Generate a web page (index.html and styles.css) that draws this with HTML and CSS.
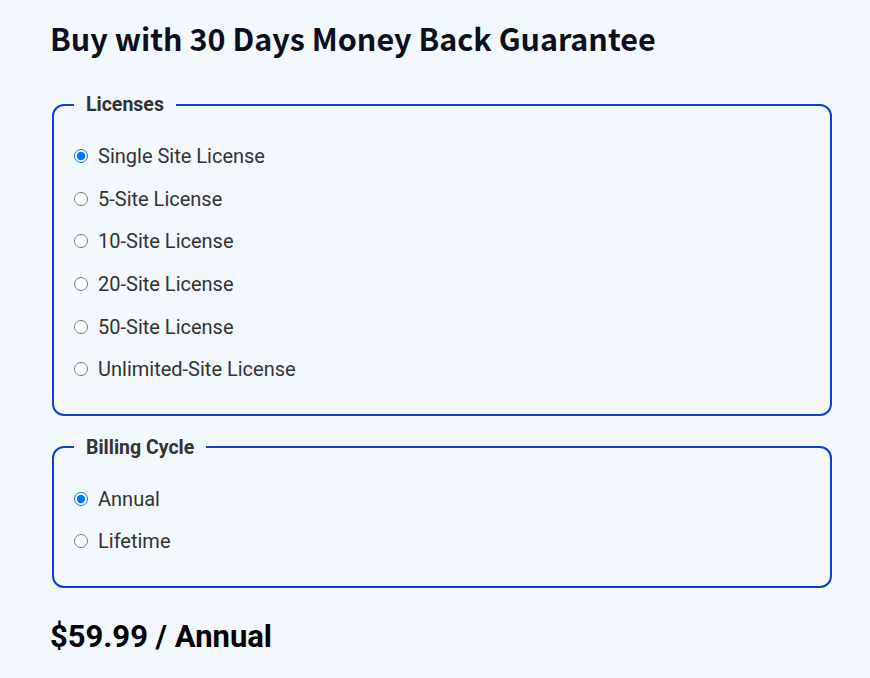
FILE: index.html
```html
<!DOCTYPE html>
<html>
<head>
  <title>Buy with 30 Days Money Back Guarantee</title>
  <link rel="stylesheet" href="styles.css">
</head>
<body>
  <div class="page">
    <h1>Buy with 30 Days Money Back Guarantee</h1>

    <fieldset class="option-group">
      <legend>Licenses</legend>
      <label class="option"><input type="radio" name="license" value="1" checked> Single Site License</label>
      <label class="option"><input type="radio" name="license" value="5"> 5-Site License</label>
      <label class="option"><input type="radio" name="license" value="10"> 10-Site License</label>
      <label class="option"><input type="radio" name="license" value="20"> 20-Site License</label>
      <label class="option"><input type="radio" name="license" value="50"> 50-Site License</label>
      <label class="option"><input type="radio" name="license" value="unlimited"> Unlimited-Site License</label>
    </fieldset>

    <fieldset class="option-group">
      <legend>Billing Cycle</legend>
      <label class="option"><input type="radio" name="cycle" value="annual" checked> Annual</label>
      <label class="option"><input type="radio" name="cycle" value="lifetime"> Lifetime</label>
    </fieldset>

    <div class="price">$59.99 / Annual</div>
  </div>
</body>
</html>
```

FILE: styles.css
```css
body {
  margin: 0;
  background-color: #f3f7fe;
  font-family: Roboto, "Liberation Sans", sans-serif;
  color: #333;
}
.page {
  padding: 18px 36px 0 50px;
}
h1 {
  margin: 0 0 35px;
  font-family: "Noto Sans CJK SC", "Noto Sans", sans-serif;
  font-weight: 700;
  font-size: 30.5px;
  line-height: 40px;
  color: #0b0f1e;
}
.option-group {
  margin: 0 2px 20px;
  padding: 19px 20px 23px;
  border: 2px solid #0a43d4;
  border-radius: 12px;
}
.option-group legend {
  padding: 0 12px;
  font-size: 19.5px;
  line-height: 23px;
  font-weight: 700;
  color: #333;
}
.option {
  display: flex;
  align-items: center;
  gap: 10px;
  height: 42.6px;
  font-size: 20px;
  color: #333;
  cursor: pointer;
}
.option input {
  margin: 0;
  width: 14px;
  height: 14px;
}
.price {
  margin-top: 31px;
  font-size: 31px;
  line-height: 36px;
  font-weight: 700;
  color: #000;
}
```
